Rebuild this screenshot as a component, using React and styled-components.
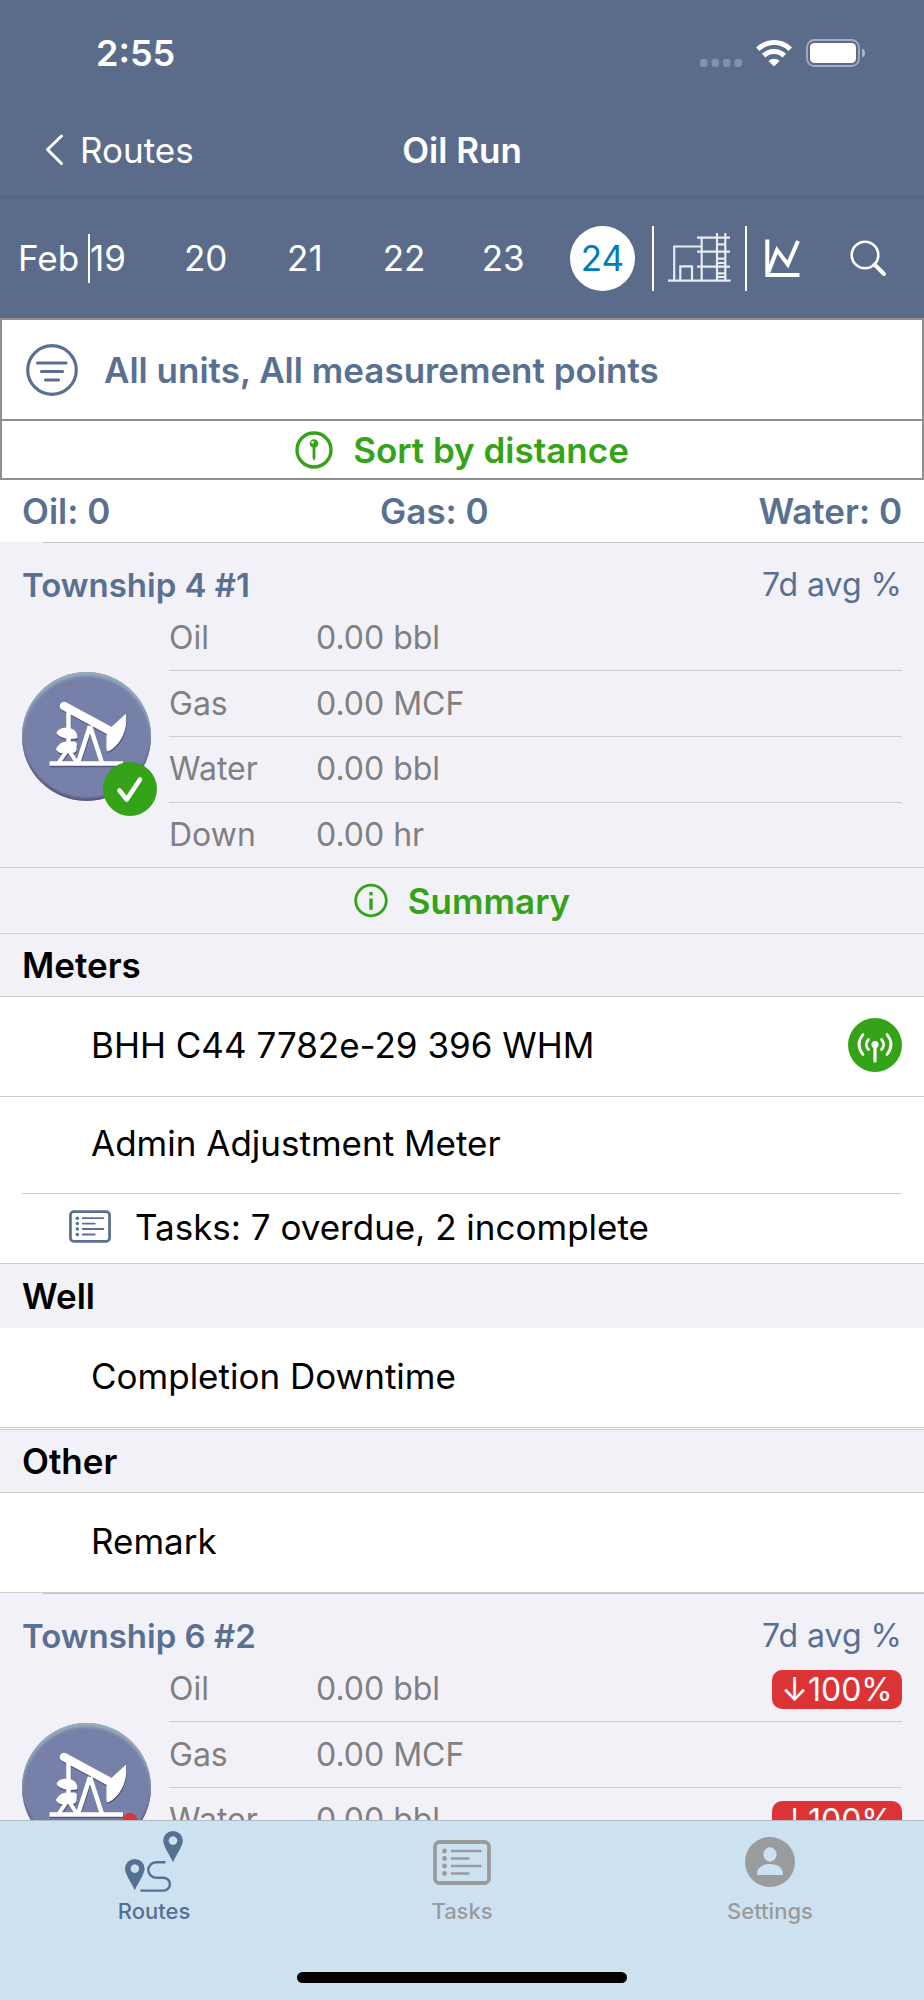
import React, { useState } from "react"
import styled, { createGlobalStyle } from "styled-components"

const slate = "#5a7090"
const green = "#35a317"
const red = "#dc3436"
const line = "#cdcdd2"

const GlobalStyle = createGlobalStyle`
  *, ::after, ::before {
    box-sizing: border-box;
  }

  body {
    margin: 0;
    font-family: Inter, "Liberation Sans", sans-serif;
    font-size: 35px;
    line-height: 42px;
    color: #000;
    background-color: #fff;
  }

  button {
    font: inherit;
    color: inherit;
    background: none;
    border: none;
    padding: 0;
  }

  a {
    color: inherit;
    text-decoration: none;
  }

  svg {
    display: block;
    flex-shrink: 0;
  }
`

const Layout = styled.div`
  display: flex;
  flex-direction: column;
  height: 100vh;
`

const Header = styled.header`
  flex-shrink: 0;
  background-color: #5b6c8a;
  color: #fff;
`

const StatusBar = styled.div`
  display: flex;
  align-items: center;
  justify-content: space-between;
  height: 106px;
  padding: 0 59px 0 96px;
  font-size: 36px;
  font-weight: 600;
`

const StatusIcons = styled.div`
  display: flex;
  align-items: flex-end;
  gap: 14px;
`

const NavBar = styled.nav`
  display: grid;
  grid-template-columns: 1fr auto 1fr;
  align-items: center;
  height: 92px;
  padding: 0 45px 2px;
  border-bottom: 2px solid #526482;
`

const BackLink = styled.a`
  display: flex;
  align-items: center;
  gap: 16px;
`

const NavTitle = styled.h1`
  margin: 0;
  font-size: 35px;
  font-weight: 600;
`

const DateBar = styled.div`
  display: flex;
  align-items: center;
  height: 120px;
  padding: 0 6px 0 18px;
`

const Month = styled.span`
  flex: 0 0 72px;
  height: 49px;
  line-height: 49px;
  border-right: 2px solid #fff;
`

const Day = styled.button`
  flex: ${p => (p.$first ? 66 : 99)} 1 0;
  display: flex;
  justify-content: ${p => (p.$first ? "flex-start" : "center")};
`

const DayNumber = styled.span`
  line-height: 65px;
  ${p =>
    p.$selected &&
    `
    width: 65px;
    border-radius: 50%;
    background-color: #fff;
    color: #007cba;
  `}
`

const Tool = styled.button`
  display: flex;
  align-items: center;
  justify-content: center;
  width: ${p => p.$width}px;
  height: 65px;
  border-left: ${p => (p.$divided ? "2px solid #fff" : "none")};
`

const List = styled.main`
  flex: 1;
  min-height: 0;
  overflow: hidden;
`

const FilterBox = styled.div`
  border: 2px solid #8e8e93;
`

const FilterButton = styled.button`
  display: flex;
  align-items: center;
  gap: 26px;
  width: 100%;
  height: 99px;
  padding-left: 24px;
  color: ${slate};
  font-weight: 600;
`

const ActionButton = styled.button`
  display: flex;
  align-items: center;
  justify-content: center;
  gap: 20px;
  width: 100%;
  height: ${p => p.$height}px;
  color: ${green};
  font-weight: 600;
`

const SortRow = styled.div`
  border-top: 2px solid #8e8e93;
`

const Totals = styled.div`
  display: flex;
  justify-content: space-between;
  padding: 10px 22px;
  color: ${slate};
  font-weight: 600;
`

const Card = styled.section`
  background-color: #f2f1f7;

  &::before {
    content: "";
    display: block;
    height: 1px;
    margin-left: 43px;
    background-color: #c4c4c8;
  }
`

const CardHeader = styled.div`
  display: flex;
  justify-content: space-between;
  padding: 21px 22px 0;
  color: ${slate};
`

const UnitName = styled.h2`
  margin: 0;
  font-size: 33px;
  font-weight: 600;
`

const AverageLabel = styled.span`
  font-size: 32px;
`

const CardBody = styled.div`
  display: flex;
  align-items: center;
  gap: 18px;
  padding: 0 22px;
`

const UnitIcon = styled.div`
  position: relative;
  flex: 0 0 129px;
  height: 129px;
  border-radius: 50%;
  background-color: #7780a8;
  box-shadow: inset 0 4px 3px #97acbc, inset 0 -3px 2px #5c5c82;
`

const UnitBadge = styled.div`
  position: absolute;
  right: -6px;
  bottom: -15px;
`

const Readings = styled.table`
  flex: 1;
  height: 261px;
  border-collapse: collapse;
  font-size: 32px;
  color: #808080;

  th,
  td {
    padding: 0;
    font-weight: 400;
    text-align: left;
  }

  th {
    width: 147px;
  }

  td:last-child {
    width: 130px;
  }

  tr + tr {
    border-top: 1px solid ${line};
  }
`

const Change = styled.span`
  display: block;
  line-height: 39px;
  border-radius: 10px;
  background-color: ${red};
  color: #fff;
  text-align: center;
`

const SummaryRow = styled.div`
  border-top: 1px solid ${line};
  background-color: #f2f1f7;
`

const SectionTitle = styled.h3`
  margin: 0;
  padding: ${p => (p.$plain ? 11 : 10)}px 22px;
  border-top: 1px solid ${line};
  border-bottom: ${p => (p.$plain ? "none" : `1px solid ${line}`)};
  background-color: #f2f1f7;
  font-size: 35px;
  font-weight: 600;

  button + & {
    margin-top: 1px;
  }
`

const Point = styled.button`
  display: flex;
  align-items: center;
  justify-content: space-between;
  width: 100%;
  height: ${p => p.$height || 100}px;
  padding: 0 22px 4px 91px;
  border-bottom: 1px solid ${p => (p.$open ? "transparent" : line)};
`

const Tasks = styled.div`
  padding: 0 22px;
`

const TaskButton = styled.button`
  display: flex;
  align-items: center;
  gap: 24px;
  width: 100%;
  height: 70px;
  padding: 0 0 4px 47px;
  border-top: 1px solid ${line};

  svg {
    color: ${slate};
  }
`

const TabBar = styled.nav`
  flex: 0 0 180px;
  display: flex;
  flex-direction: column;
  justify-content: space-between;
  align-items: center;
  border-top: 1px solid #b2bcc4;
  background-color: #cde2f0;
`

const Tabs = styled.div`
  display: flex;
  width: 100%;
  padding-top: 7px;
`

const Tab = styled.a`
  flex: 1;
  display: flex;
  flex-direction: column;
  align-items: center;
  color: ${p => (p.$active ? "#547194" : "#999b9d")};
  font-size: 22px;
  font-weight: 500;
  line-height: 30px;
`

const TabIcon = styled.span`
  display: flex;
  align-items: center;
  height: 68px;
`

const HomeIndicator = styled.div`
  width: 330px;
  height: 11px;
  margin-bottom: 17px;
  border-radius: 6px;
  background-color: #000;
`

const SignalIcon = () => (
  <svg width="42" height="8" viewBox="0 0 42 8" fill="#fff" opacity="0.25">
    <rect x="0" width="7.5" height="8" rx="2.4" />
    <rect x="11.5" width="7.5" height="8" rx="2.4" />
    <rect x="23" width="7.5" height="8" rx="2.4" />
    <rect x="34.5" width="7.5" height="8" rx="2.4" />
  </svg>
)

const WifiIcon = () => (
  <svg width="36" height="28" viewBox="0 0 36 28" fill="none" stroke="#fff">
    <path d="M1.7 10.3a23.2 23.2 0 0 1 32.6 0" strokeWidth="5" />
    <path d="M7.7 16.6a14.7 14.7 0 0 1 20.6 0" strokeWidth="5" />
    <path d="M12.4 22a8.3 8.3 0 0 1 11.2 0L18 27.4z" fill="#fff" stroke="none" />
  </svg>
)

const BatteryIcon = () => (
  <svg width="59" height="28" viewBox="0 0 59 28">
    <rect x="1" y="1" width="52" height="26" rx="7.5" fill="none" stroke="#fff" strokeWidth="1.8" opacity="0.45" />
    <rect x="4" y="4" width="46" height="20" rx="4.5" fill="#fff" />
    <path d="M56 9.5c4 1.5 4 7.5 0 9z" fill="#fff" opacity="0.5" />
  </svg>
)

const ChevronIcon = () => (
  <svg width="19" height="32" viewBox="0 0 19 32" fill="none" stroke="#fff" strokeWidth="3" strokeLinecap="round" strokeLinejoin="round">
    <path d="M16.5 2L2.5 15.5L16.5 29.5" />
  </svg>
)

const FacilityIcon = () => (
  <svg width="63" height="50" viewBox="0 0 63 50" fill="none" stroke="#e6eaf2" strokeWidth="2.2">
    <path d="M0 47.7H62.5M6.2 47.7V13.5H33.7M12.3 47.7V33.4H24V47.7" />
    <path d="M33.7 4.7V47.7M29 4.7H62M29 18.7H62M29 33.7H62" />
    <path d="M49 0V47.7M57.3 0V47.7M49 11.3H57.3M49 25.7H57.3M49 30H57.3M49 40.3H57.3M49 44H57.3" />
  </svg>
)

const ChartIcon = () => (
  <svg width="35" height="38" viewBox="0 0 35 38" fill="none" stroke="#fff" strokeWidth="4">
    <path d="M2.3 0.5V36H34.5" />
    <path d="M3.5 33L12 11L22.8 25.5L33 2" />
  </svg>
)

const SearchIcon = () => (
  <svg width="37" height="37" viewBox="0 0 37 37" fill="none" stroke="#fff">
    <circle cx="15" cy="15" r="13.3" strokeWidth="2.6" />
    <path d="M24.5 24.5L34 34" strokeWidth="4" strokeLinecap="round" />
  </svg>
)

const FilterIcon = () => (
  <svg width="52" height="52" viewBox="0 0 52 52" fill="none" stroke={slate} strokeWidth="3.2" strokeLinecap="round">
    <circle cx="26" cy="26" r="24.3" />
    <path d="M11.5 19H40M15.5 27.5H36.5M19.5 36H32.5" />
  </svg>
)

const PinIcon = () => (
  <svg width="38" height="38" viewBox="0 0 38 38">
    <circle cx="19" cy="19" r="17" fill="none" stroke={green} strokeWidth="3.4" />
    <circle cx="19" cy="12.5" r="4.3" fill={green} />
    <path d="M17.6 15H20.4V27L19 30L17.6 27z" fill={green} />
    <circle cx="17.6" cy="11.3" r="1.2" fill="#fff" />
  </svg>
)

const InfoIcon = () => (
  <svg width="34" height="35" viewBox="0 0 34 35">
    <circle cx="17" cy="17.5" r="15.3" fill="none" stroke={green} strokeWidth="2.8" />
    <rect x="15.3" y="9" width="3.4" height="3.4" fill={green} />
    <rect x="15.3" y="15.5" width="3.4" height="11.3" fill={green} />
  </svg>
)

const PumpJackShape = () => (
  <g>
    <path d="M42 34L90 60" strokeWidth="8.5" strokeLinecap="round" />
    <path d="M103.5 42.5C105.5 59 97 74 86 79C84.5 79 85 76 85 63L90 55z" fill="currentColor" strokeWidth="1" />
    <path d="M46.5 38V80" strokeWidth="4.5" />
    <path d="M34.5 61C36 56 42 55 48 56C53 57.5 55.5 61 55.5 66C50 68 38 67 34.5 61z" fill="currentColor" stroke="none" />
    <path d="M34 77C37 70 43 69 50 69.5C54 69 56 71 54.5 75C55.5 80 52 82 47 80C41 82 36 82 34 77z" fill="currentColor" stroke="none" />
    <path d="M46 77L36.5 91M46 77L55 91" strokeWidth="4" />
    <path d="M68 54L56 91M68 54L80 91" strokeWidth="4.5" />
    <path d="M27.5 91.5H101" strokeWidth="4.5" />
  </g>
)

const PumpJackIcon = () => (
  <svg width="129" height="129" viewBox="0 0 129 129" fill="none" stroke="currentColor">
    <g color="#4b4a78" opacity="0.8" transform="translate(0.5 1.5)">
      <PumpJackShape />
    </g>
    <g color="#fff">
      <PumpJackShape />
    </g>
  </svg>
)

const CheckIcon = () => (
  <svg width="54" height="54" viewBox="0 0 54 54" fill="none" stroke="#fff" strokeWidth="4.6" strokeLinecap="round" strokeLinejoin="round">
    <circle cx="27" cy="27" r="27" fill={green} stroke="none" />
    <path d="M16.5 28.5L23.7 37.5L37 17.5" />
  </svg>
)

const WarningIcon = () => (
  <svg width="54" height="54" viewBox="0 0 54 54" fill={red}>
    <path d="M27 0Q31.500 0 34 5L53 42Q55 50 47 50H7Q-1 50 1 42L20 5Q22.500 0 27 0z" />
    <path d="M27 16V32M27 40V41" stroke="#fff" strokeWidth="5" strokeLinecap="round" />
  </svg>
)

const AntennaIcon = () => (
  <svg width="54" height="54" viewBox="0 0 54 54" fill="none" stroke="#fff" strokeWidth="2.8" strokeLinecap="round">
    <circle cx="27" cy="27" r="27" fill={green} stroke="none" />
    <circle cx="27" cy="26.5" r="3.6" fill="#fff" stroke="none" />
    <path d="M27 28V43" strokeWidth="3.2" />
    <path d="M20.5 21.5C17.7 24.5 17.7 28.5 20.5 31.5M33.5 21.5C36.3 24.5 36.3 28.5 33.5 31.5" />
    <path d="M15 16.5C9.8 23 9.8 30 15 36.5M39 16.5C44.2 23 44.2 30 39 36.5" />
  </svg>
)

const TasksIcon = ({ width, height }) => (
  <svg width={width} height={height} viewBox="0 0 58 45" fill="none" stroke="currentColor" strokeWidth="2.6" strokeLinecap="round">
    <rect x="2" y="2" width="54" height="41" rx="4.5" strokeWidth="3.8" />
    <path d="M19 11H47.5M19 18.5H35.5M19 26H47.5M19 33.5H35.5" />
    <g fill="currentColor" stroke="none">
      <circle cx="11.5" cy="11" r="2.4" />
      <circle cx="11.5" cy="18.5" r="2.4" />
      <circle cx="11.5" cy="26" r="2.4" />
      <circle cx="11.5" cy="33.5" r="2.4" />
    </g>
  </svg>
)

const RoutesIcon = () => (
  <svg width="58" height="62" viewBox="0 0 58 62" fill="currentColor" fillRule="evenodd">
    <path d="M48 0a9.8 9.8 0 0 1 9.8 9.8c0 5-5.8 13.2-9.8 21.4c-4-8.2-9.8-16.4-9.8-21.4a9.8 9.8 0 0 1 9.8-9.8zM48 5.3a4.3 4.3 0 1 0 0.01 0z" />
    <path d="M9.8 28a9.8 9.8 0 0 1 9.8 9.8c0 5-5.8 13.2-9.8 21.4c-4-8.2-9.8-16.4-9.8-21.4a9.8 9.8 0 0 1 9.8-9.8zM9.8 33.3a4.3 4.3 0 1 0 0.01 0z" />
    <path d="M40.5 31.3H31a7.7 7.7 0 0 0 0 15.4H38.500a6.4 6.4 0 0 1 0 12.9H15.5" fill="none" stroke="currentColor" strokeWidth="2.4" />
  </svg>
)

const SettingsIcon = () => (
  <svg width="50" height="50" viewBox="0 0 50 50">
    <circle cx="25" cy="25" r="25" fill="currentColor" />
    <ellipse cx="25" cy="17.5" rx="6.6" ry="7.2" fill="#cde2f0" />
    <path d="M12 37C12 31 17 27 25 27S38 31 38 37Q38 38 37 38H13Q12 38 12 37z" fill="#cde2f0" />
  </svg>
)

const units = [
  {
    name: "Township 4 #1",
    done: true,
    readings: [
      { label: "Oil", value: "0.00 bbl" },
      { label: "Gas", value: "0.00 MCF" },
      { label: "Water", value: "0.00 bbl" },
      { label: "Down", value: "0.00 hr" }
    ]
  },
  {
    name: "Township 6 #2",
    done: false,
    readings: [
      { label: "Oil", value: "0.00 bbl", change: "↓100%" },
      { label: "Gas", value: "0.00 MCF" },
      { label: "Water", value: "0.00 bbl", change: "↓100%" },
      { label: "Down", value: "0.00 hr" }
    ]
  }
]

const days = [19, 20, 21, 22, 23, 24]

const UnitCard = ({ unit }) => (
  <Card>
    <CardHeader>
      <UnitName>{unit.name}</UnitName>
      <AverageLabel>7d avg %</AverageLabel>
    </CardHeader>
    <CardBody>
      <UnitIcon>
        <PumpJackIcon />
        <UnitBadge>{unit.done ? <CheckIcon /> : <WarningIcon />}</UnitBadge>
      </UnitIcon>
      <Readings>
        <tbody>
          {unit.readings.map(r => (
            <tr key={r.label}>
              <th scope="row">{r.label}</th>
              <td>{r.value}</td>
              <td>{r.change && <Change>{r.change}</Change>}</td>
            </tr>
          ))}
        </tbody>
      </Readings>
    </CardBody>
  </Card>
)

const App = () => {
  const [day, setDay] = useState(24)

  return (
    <Layout>
      <GlobalStyle />
      <Header>
        <StatusBar>
          <span>2:55</span>
          <StatusIcons>
            <SignalIcon />
            <WifiIcon />
            <BatteryIcon />
          </StatusIcons>
        </StatusBar>
        <NavBar>
          <BackLink href="#routes">
            <ChevronIcon />
            Routes
          </BackLink>
          <NavTitle>Oil Run</NavTitle>
        </NavBar>
        <DateBar>
          <Month>Feb</Month>
          {days.map((d, i) => (
            <Day key={d} $first={i === 0} onClick={() => setDay(d)}>
              <DayNumber $selected={d === day}>{d}</DayNumber>
            </Day>
          ))}
          <Tool $width={93} $divided aria-label="Facilities">
            <FacilityIcon />
          </Tool>
          <Tool $width={74} $divided aria-label="Chart">
            <ChartIcon />
          </Tool>
          <Tool $width={99} aria-label="Search">
            <SearchIcon />
          </Tool>
        </DateBar>
      </Header>

      <List>
        <FilterBox>
          <FilterButton>
            <FilterIcon />
            All units, All measurement points
          </FilterButton>
          <SortRow>
            <ActionButton $height={57}>
              <PinIcon />
              Sort by distance
            </ActionButton>
          </SortRow>
        </FilterBox>
        <Totals>
          <span>Oil: 0</span>
          <span>Gas: 0</span>
          <span>Water: 0</span>
        </Totals>

        <UnitCard unit={units[0]} />
        <SummaryRow>
          <ActionButton $height={65}>
            <InfoIcon />
            Summary
          </ActionButton>
        </SummaryRow>
        <SectionTitle>Meters</SectionTitle>
        <Point>
          BHH C44 7782e-29 396 WHM
          <AntennaIcon />
        </Point>
        <Point $height={96} $open>
          Admin Adjustment Meter
        </Point>
        <Tasks>
          <TaskButton>
            <TasksIcon width={42} height={33} />
            Tasks: 7 overdue, 2 incomplete
          </TaskButton>
        </Tasks>
        <SectionTitle $plain>Well</SectionTitle>
        <Point>Completion Downtime</Point>
        <SectionTitle>Other</SectionTitle>
        <Point>Remark</Point>

        <UnitCard unit={units[1]} />
      </List>

      <TabBar>
        <Tabs>
          <Tab href="#routes" $active>
            <TabIcon>
              <RoutesIcon />
            </TabIcon>
            Routes
          </Tab>
          <Tab href="#tasks">
            <TabIcon>
              <TasksIcon width={58} height={45} />
            </TabIcon>
            Tasks
          </Tab>
          <Tab href="#settings">
            <TabIcon>
              <SettingsIcon />
            </TabIcon>
            Settings
          </Tab>
        </Tabs>
        <HomeIndicator />
      </TabBar>
    </Layout>
  )
}

export default App
